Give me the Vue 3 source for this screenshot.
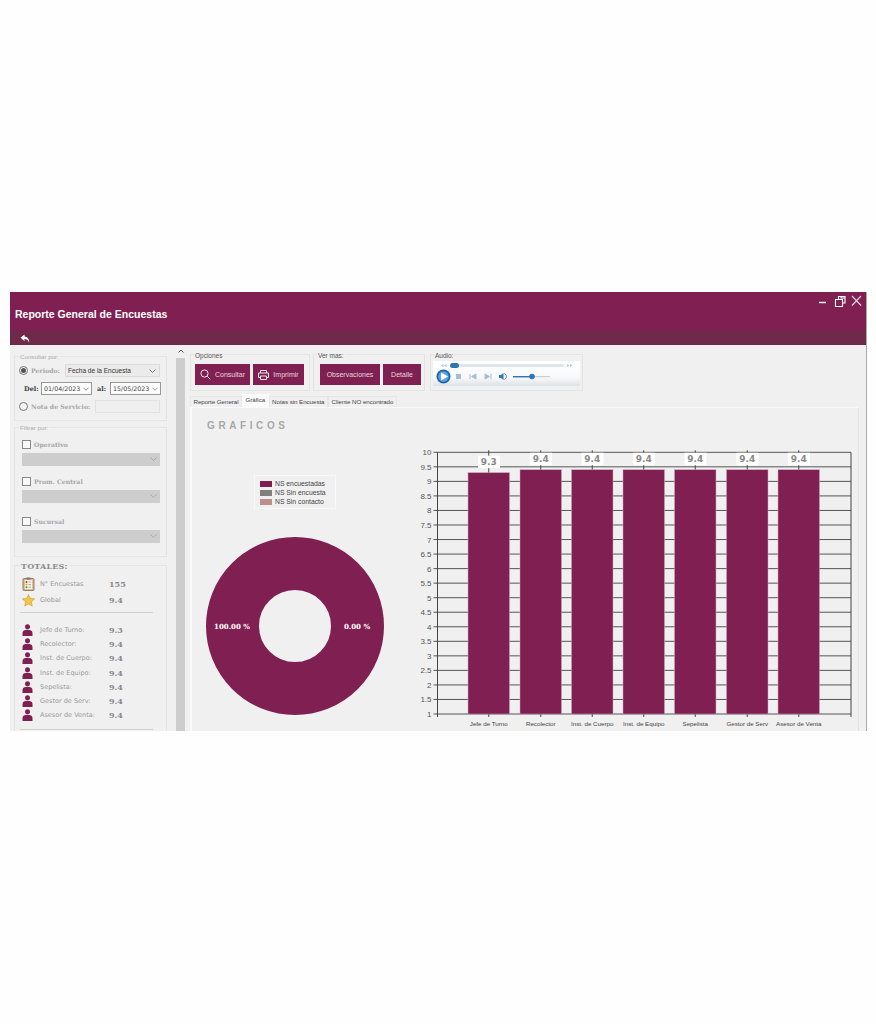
<script setup>
const scoreRows = [
  { label: 'Jefe de Turno:', value: '9.3' },
  { label: 'Recolector:', value: '9.4' },
  { label: 'Inst. de Cuerpo:', value: '9.4' },
  { label: 'Inst. de Equipo:', value: '9.4' },
  { label: 'Sepelista:', value: '9.4' },
  { label: 'Gestor de Serv:', value: '9.4' },
  { label: 'Asesor de Venta:', value: '9.4' },
]

const filters = [
  { label: 'Operativo', gap: 'first' },
  { label: 'Prom. Central', gap: 'second' },
  { label: 'Sucursal', gap: 'third' },
]

const tabs = ['Reporte General', 'Gráfica', 'Notas sin Encuesta', 'Cliente NO encontrado']

const legend = [
  { label: 'NS encuestadas', color: '#802052' },
  { label: 'NS Sin encuesta', color: '#808080' },
  { label: 'NS Sin contacto', color: '#bc8f8f' },
]

// bar chart, in svg units
const axisLeft = 27.5
const axisRight = 441
const yTop = 12.3
const yBottom = 274
const yFor = (v) => yBottom - ((v - 1) / 9) * (yBottom - yTop)

const ticks = []
for (let v = 1; v <= 10; v += 0.5) ticks.push(v)

const bars = [
  { label: 'Jefe de Turno', value: 9.3, x: 58 },
  { label: 'Recolector', value: 9.4, x: 110 },
  { label: 'Inst. de Cuerpo', value: 9.4, x: 161.5 },
  { label: 'Inst. de Equipo', value: 9.4, x: 213 },
  { label: 'Sepelista', value: 9.4, x: 264.5 },
  { label: 'Gestor de Serv', value: 9.4, x: 316.5 },
  { label: 'Asesor de Venta', value: 9.4, x: 368 },
]
const barWidth = 41.5
</script>

<template>
  <div class="page">
    <div class="window">
      <header class="titlebar">
        <h1>Reporte General de Encuestas</h1>
        <div class="controls">
          <svg width="44" height="14" viewBox="0 0 44 14">
            <path d="M0 8.5H7" stroke="#fff" stroke-width="1.4" />
            <path d="M16.5 5.5H23.5V12.5H16.5ZM19.5 5.5V2.5H26V9H23.5M22 2.5H26V4H22Z" fill="none" stroke="#fff" stroke-width="1.1" />
            <path d="M33 2L42 11.5M42 2L33 11.5" stroke="#e8d5df" stroke-width="1.1" />
          </svg>
        </div>
      </header>
      <div class="subbar">
        <svg width="10" height="9" viewBox="0 0 10 9">
          <path d="M4.5 0.5L0.5 3.8L4.5 7V5C6.5 5 8 6 9.3 8.5C9 5 7.5 2.8 4.5 2.6Z" fill="#fff" />
        </svg>
      </div>

      <div class="body">
        <aside class="sidebar">
          <section class="group consult">
            <span class="legend">Consultar por:</span>
            <div class="row period-row">
              <span class="radio checked"></span>
              <span class="serif-label">Periodo:</span>
              <div class="select period">Fecha de la Encuesta
                <svg class="chev" width="7" height="4" viewBox="0 0 7 4"><path d="M0.5 0.5L3.5 3.5L6.5 0.5" fill="none" stroke="#777" /></svg>
              </div>
            </div>
            <div class="row date-row">
              <b class="date-label">Del:</b>
              <div class="date">01/04/2023
                <svg class="chev" width="6" height="4" viewBox="0 0 7 4"><path d="M0.5 0.5L3.5 3.5L6.5 0.5" fill="none" stroke="#888" /></svg>
              </div>
              <b class="date-label al">al:</b>
              <div class="date">15/05/2023
                <svg class="chev" width="6" height="4" viewBox="0 0 7 4"><path d="M0.5 0.5L3.5 3.5L6.5 0.5" fill="none" stroke="#888" /></svg>
              </div>
            </div>
            <div class="row nota-row">
              <span class="radio"></span>
              <span class="serif-label">Nota de Servicio:</span>
              <div class="nota-input"></div>
            </div>
          </section>

          <section class="group filter">
            <span class="legend">Filtrar por:</span>
            <div v-for="f in filters" :key="f.label" class="filter-item" :class="f.gap">
              <div class="row check-row">
                <span class="check"></span>
                <span class="serif-label">{{ f.label }}</span>
              </div>
              <div class="combo">
                <svg class="chev" width="7" height="4" viewBox="0 0 7 4"><path d="M0.5 0.5L3.5 3.5L6.5 0.5" fill="none" stroke="#aaa" /></svg>
              </div>
            </div>
          </section>

          <section class="group totals">
            <span class="legend strong">TOTALES:</span>
            <div class="total-row first">
              <svg width="13" height="14" viewBox="0 0 13 14">
                <rect x="1" y="1.5" width="11" height="12" rx="1" fill="#d9b48a" stroke="#8a6a4a" stroke-width="0.8" />
                <rect x="2.8" y="3" width="7.4" height="9.2" fill="#f7f3e8" />
                <rect x="4.5" y="0.5" width="4" height="2" fill="#777" />
                <circle cx="4.5" cy="5" r="1" fill="#c0392b" />
                <circle cx="4.5" cy="7.6" r="1" fill="#d9a520" />
                <circle cx="4.5" cy="10.2" r="1" fill="#4a9a3a" />
                <path d="M6.5 5H9M6.5 7.6H9M6.5 10.2H9" stroke="#888" stroke-width="0.7" />
              </svg>
              <span class="total-label">N° Encuestas</span>
              <span class="total-value">155</span>
            </div>
            <div class="total-row">
              <svg width="13" height="13" viewBox="0 0 13 13">
                <path d="M6.5 0.5L8.3 4.4L12.6 4.9L9.4 7.8L10.3 12L6.5 9.9L2.7 12L3.6 7.8L0.4 4.9L4.7 4.4Z" fill="#f2c544" stroke="#c99a2a" stroke-width="0.6" />
              </svg>
              <span class="total-label">Global</span>
              <span class="total-value">9.4</span>
            </div>
            <hr class="divider" />
            <div v-for="r in scoreRows" :key="r.label" class="score-row">
              <svg width="11" height="12" viewBox="0 0 11 12">
                <circle cx="5.5" cy="2.8" r="2.5" fill="#802052" />
                <path d="M0.5 12V9C0.5 7 2.5 5.8 5.5 5.8S10.5 7 10.5 9V12Z" fill="#802052" />
              </svg>
              <span class="total-label">{{ r.label }}</span>
              <span class="total-value">{{ r.value }}</span>
            </div>
            <hr class="divider last" />
          </section>
        </aside>

        <div class="scrollbar">
          <svg width="6" height="4" viewBox="0 0 6 4"><path d="M0.5 3.5L3 1L5.5 3.5" fill="none" stroke="#555" /></svg>
          <div class="thumb"></div>
        </div>

        <main class="main">
          <div class="toolbar">
            <section class="group opciones">
              <span class="legend dark">Opciones</span>
              <button class="btn consultar">
                <svg width="11" height="11" viewBox="0 0 11 11"><circle cx="4.5" cy="4.5" r="3.6" fill="none" stroke="#f1e4ea" stroke-width="1" /><path d="M7.2 7.2L10.3 10.3" stroke="#f1e4ea" stroke-width="1" /></svg>
                Consultar
              </button>
              <button class="btn imprimir">
                <svg width="11" height="10" viewBox="0 0 11 10"><path d="M2.5 3V0.5H8.5V3M2.5 7.5H0.5V3H10.5V7.5H8.5M2.5 6H8.5V9.5H2.5Z" fill="none" stroke="#f1e4ea" stroke-width="1" /></svg>
                Imprimir
              </button>
            </section>
            <section class="group vermas">
              <span class="legend dark">Ver mas:</span>
              <button class="btn observaciones">Observaciones</button>
              <button class="btn detalle">Detalle</button>
            </section>
            <section class="group audio">
              <span class="legend dark">Audio:</span>
              <svg class="player" width="147" height="25" viewBox="0 0 147 25">
                <defs>
                  <linearGradient id="playerBg" x1="0" y1="0" x2="0" y2="1">
                    <stop offset="0" stop-color="#ffffff" />
                    <stop offset="0.65" stop-color="#f8f9fa" />
                    <stop offset="1" stop-color="#dfe3e6" />
                  </linearGradient>
                </defs>
                <rect width="147" height="25" fill="url(#playerBg)" />
                <path d="M8 4.5L10.5 3V6ZM11 4.5L13.5 3V6Z" fill="#a9c3dc" />
                <rect x="17" y="3" width="114" height="3" rx="1.5" fill="#dfe5ea" />
                <rect x="17" y="2" width="9" height="5" rx="2.5" fill="#2f75b5" />
                <path d="M134 3V6L136.5 4.5ZM137 3V6L139.5 4.5Z" fill="#a9c3dc" />
                <circle cx="10.5" cy="15.5" r="7" fill="#1f63ad" />
                <circle cx="10.5" cy="15.5" r="5.2" fill="#5aa2e0" />
                <path d="M8 11.5L15 15.5L8 19.5Z" fill="#fff" />
                <rect x="23" y="13" width="5" height="5" fill="#a7bdd3" />
                <path d="M37 13V18M43 13L38.5 15.5L43 18Z" stroke="#a7bdd3" fill="#a7bdd3" />
                <path d="M52 13L56.5 15.5L52 18ZM58 13V18" stroke="#a7bdd3" fill="#a7bdd3" />
                <path d="M66 14H68L70.5 12V19L68 17H66Z" fill="#2f75b5" />
                <path d="M71.5 12.5C74 14 74 17 71.5 18.5" stroke="#2f75b5" fill="none" />
                <rect x="80" y="15" width="37" height="1.2" fill="#c6ced6" />
                <rect x="80" y="15" width="18" height="1.4" fill="#2f75b5" />
                <circle cx="99" cy="15.5" r="2.8" fill="#2f75b5" />
              </svg>
            </section>
          </div>

          <nav class="tabs">
            <span v-for="(t, i) in tabs" :key="t" class="tab" :class="{ active: i === 1 }">{{ t }}</span>
          </nav>

          <div class="panel">
            <h2>GRAFICOS</h2>
            <div class="charts">
              <div class="donut-col">
                <ul class="chart-legend">
                  <li v-for="l in legend" :key="l.label">
                    <i :style="{ background: l.color }"></i>{{ l.label }}
                  </li>
                </ul>
                <svg class="donut" width="180" height="180" viewBox="0 0 180 180">
                  <circle cx="90" cy="90" r="62.5" fill="none" stroke="#802052" stroke-width="53" />
                  <text x="27" y="93" class="donut-text">100.00 %</text>
                  <text x="152" y="93" class="donut-text">0.00 %</text>
                </svg>
              </div>

              <svg class="bars" width="449" height="291" viewBox="0 0 449 291">
                <g v-for="t in ticks" :key="t">
                  <line :x1="axisLeft - 4" :x2="axisRight" :y1="yFor(t)" :y2="yFor(t)" stroke="#555" stroke-width="1" />
                  <text :x="axisLeft - 6" :y="yFor(t) + 3" class="tick">{{ t }}</text>
                </g>
                <line :x1="axisLeft" :x2="axisLeft" :y1="yTop" :y2="yBottom + 3" stroke="#444" />
                <line :x1="axisRight" :x2="axisRight" :y1="yTop" :y2="yBottom + 3" stroke="#444" />
                <g v-for="b in bars" :key="b.label">
                  <line :x1="b.x + barWidth / 2" :x2="b.x + barWidth / 2" :y1="yTop - 2" :y2="yBottom + 3" stroke="#444" />
                  <rect :x="b.x" :y="yFor(b.value)" :width="barWidth" :height="yBottom - yFor(b.value)" fill="#802052" stroke="#c9a5b8" stroke-width="0.5" />
                  <rect :x="b.x + 10" :y="yFor(b.value) - 17" width="22" height="12.5" fill="#fff" />
                  <text :x="b.x + barWidth / 2" :y="yFor(b.value) - 7.5" class="bar-value">{{ b.value }}</text>
                  <text :x="b.x + barWidth / 2" :y="yBottom + 11.5" class="bar-label">{{ b.label }}</text>
                </g>
              </svg>
            </div>
          </div>
        </main>
      </div>
    </div>
  </div>
</template>

<style scoped>
.page {
  height: 1024px;
  box-sizing: border-box;
  padding: 292px 9px 0 10px;
  background: #fefefe;
  font-family: "Liberation Sans", Arial, sans-serif;
}

.window {
  height: 439px;
  overflow: hidden;
  background: #f0f0f0;
  border-right: 1px solid #aaa;
  display: flex;
  flex-direction: column;
}

.titlebar {
  height: 39px;
  flex: none;
  background: #802052;
  display: flex;
  justify-content: space-between;
}

.titlebar h1 {
  margin: 15px 0 0 5px;
  font-size: 10.5px;
  line-height: 14px;
  color: #fff;
  font-weight: bold;
}

.controls {
  padding: 2px 3px 0 0;
}

.subbar {
  height: 14px;
  flex: none;
  background: #6e2a48;
  padding-left: 10px;
  display: flex;
  align-items: center;
}

.body {
  flex: 1;
  display: flex;
  min-height: 0;
}

.sidebar {
  width: 166px;
  flex: none;
  box-sizing: border-box;
  padding: 11px 0 0 4px;
}

.group {
  position: relative;
  box-sizing: border-box;
  border: 1px solid #e4e4e4;
}

.legend {
  position: absolute;
  top: -4px;
  left: 4px;
  padding: 0 1px;
  background: #f0f0f0;
  font-size: 6.2px;
  line-height: 7px;
  color: #aaa;
}

.legend.dark {
  left: 3px;
  color: #555;
  top: -3px;
  font-size: 6.5px;
}

.legend.strong {
  left: 5px;
  top: -5px;
  font-family: "DejaVu Serif", serif;
  font-weight: bold;
  font-size: 8px;
  line-height: 10px;
  letter-spacing: 0.2px;
  color: #8c8c8c;
}

.consult {
  width: 153px;
  height: 65px;
  padding: 7px 6px 0 4px;
}

.row {
  display: flex;
  align-items: center;
}

.radio {
  width: 7px;
  height: 7px;
  border: 1px solid #777;
  border-radius: 50%;
  flex: none;
  background: #f6f6f6;
  position: relative;
}

.radio.checked::after {
  content: "";
  position: absolute;
  inset: 1px;
  border-radius: 50%;
  background: #555;
}

.serif-label {
  margin-left: 3px;
  font-family: "DejaVu Serif", serif;
  font-weight: bold;
  font-size: 6.2px;
  color: #a6a6a6;
  white-space: nowrap;
}

.period-row {
  height: 13px;
}

.select {
  position: relative;
  margin-left: auto;
  width: 95px;
  height: 13px;
  box-sizing: border-box;
  border: 1px solid #dadada;
  background: #ebebeb;
  font-size: 6.5px;
  line-height: 11px;
  padding-left: 2px;
  color: #333;
}

.chev {
  position: absolute;
  right: 3px;
  top: 4px;
}

.date .chev {
  right: 2px;
}

.date-row {
  margin-top: 5px;
  height: 13px;
  padding-left: 5px;
}

.date-label {
  font-family: "DejaVu Serif", serif;
  font-size: 6.5px;
  color: #444;
  width: 17px;
  flex: none;
}

.date-label.al {
  margin-left: 5px;
  width: 13px;
}

.date {
  position: relative;
  width: 51px;
  height: 13px;
  flex: none;
  box-sizing: border-box;
  border: 1px solid #999;
  background: #fbfbfb;
  font-family: "DejaVu Sans", sans-serif;
  font-size: 6.3px;
  line-height: 11px;
  padding-left: 2px;
  color: #444;
}

.nota-row {
  margin-top: 5px;
  height: 13px;
}

.nota-input {
  width: 65px;
  height: 13px;
  box-sizing: border-box;
  margin-left: auto;
  border: 1px solid #e2e2e2;
  background: #efefef;
}

.filter {
  width: 153px;
  height: 130px;
  margin-top: 6px;
  padding: 0 7px;
}

.filter-item.first {
  margin-top: 11px;
}

.filter-item.second {
  margin-top: 10px;
}

.filter-item.third {
  margin-top: 13px;
}

.check-row {
  height: 11px;
}

.check {
  width: 7px;
  height: 7px;
  flex: none;
  border: 1px solid #888;
  background: #f8f8f8;
}

.check-row .serif-label {
  margin-left: 3px;
}

.combo {
  position: relative;
  margin-top: 3px;
  width: 138px;
  height: 13px;
  background: #cdcdcd;
}

.totals {
  width: 153px;
  height: 200px;
  margin-top: 8px;
  padding: 0 0 0 6px;
  border-bottom: none;
}

.total-row,
.score-row {
  display: flex;
  align-items: center;
}

.total-row {
  height: 16px;
}

.total-row.first {
  margin-top: 10px;
}

.score-row {
  height: 14.2px;
}

.total-row svg,
.score-row svg {
  flex: none;
  margin-left: 1px;
}

.total-label {
  width: 69px;
  font-family: "DejaVu Sans", sans-serif;
  font-size: 6.5px;
  color: #999;
  white-space: nowrap;
}

.score-row .total-label {
  margin-left: 7px;
}

.total-row .total-label {
  margin-left: 5px;
}

.total-value {
  font-family: "DejaVu Serif", serif;
  font-weight: bold;
  font-size: 8px;
  color: #8a8a8a;
}

.divider {
  width: 133px;
  height: 0;
  margin: 4px 0 10px -1px;
  border: none;
  border-top: 1px solid #cfcfcf;
}

.divider.last {
  margin: 7px 0 0 -1px;
}

.scrollbar {
  width: 9px;
  flex: none;
  display: flex;
  flex-direction: column;
  align-items: center;
  padding-top: 4px;
}

.scrollbar svg {
  flex: none;
}

.thumb {
  flex: 1;
  align-self: stretch;
  margin-top: 5px;
  background: #cdcdcd;
}

.main {
  width: 669px;
  flex: none;
  margin-left: 5px;
  display: flex;
  flex-direction: column;
}

.toolbar {
  display: flex;
  padding-top: 9px;
  flex: none;
  height: 37px;
}

.opciones,
.vermas {
  display: flex;
  align-items: flex-start;
  padding: 9px 0 0 4px;
  gap: 3px;
}

.opciones {
  width: 120px;
}

.vermas {
  width: 112px;
  margin-left: 3px;
  padding-left: 6px;
}

.audio {
  width: 153px;
  margin-left: 5px;
  padding: 6px 0 0 2px;
}

.player {
  display: block;
}

.btn {
  height: 21px;
  box-sizing: border-box;
  border: none;
  padding: 0;
  background: #802052;
  color: #e6d6de;
  font-family: "Liberation Sans", Arial, sans-serif;
  font-size: 7px;
  display: flex;
  align-items: center;
  justify-content: center;
  gap: 4px;
}

.consultar {
  width: 55px;
}

.imprimir {
  width: 51px;
}

.observaciones {
  width: 60px;
}

.detalle {
  width: 38px;
}

.tabs {
  display: flex;
  align-items: flex-end;
  height: 16px;
  flex: none;
}

.tab {
  height: 11px;
  box-sizing: border-box;
  padding: 0 2.5px;
  border: 1px solid #e6e6e6;
  border-bottom: none;
  font-size: 6.2px;
  letter-spacing: -0.05px;
  line-height: 10px;
  color: #444;
  white-space: nowrap;
}

.tab.active {
  height: 13px;
  background: #fbfbfb;
  border-color: #fbfbfb;
}

.panel {
  flex: 1;
  border-left: 2px solid #fafafa;
  border-right: 1px solid #e0e0e0;
  border-top: 1px solid #fafafa;
  background: #f0f0f0;
  min-height: 0;
}

.panel h2 {
  margin: 12px 0 0 15px;
  font-size: 10px;
  line-height: 12px;
  letter-spacing: 3.6px;
  color: #a8a8a8;
  font-weight: bold;
}

.charts {
  display: flex;
  align-items: flex-start;
}

.donut-col {
  width: 218px;
  flex: none;
  display: flex;
  flex-direction: column;
  align-items: flex-start;
}

.chart-legend {
  list-style: none;
  margin: 43px 0 0 62px;
  padding: 3px 0 0 5px;
  width: 82px;
  height: 34px;
  box-sizing: border-box;
  border: 1px solid #f8f8f8;
}

.chart-legend li {
  display: flex;
  align-items: center;
  height: 9px;
  font-size: 6.8px;
  color: #444;
  white-space: nowrap;
}

.chart-legend i {
  width: 12px;
  height: 6px;
  margin-right: 3px;
  flex: none;
}

.donut {
  display: block;
  margin: 27px 0 0 13px;
}

.donut-text {
  font-family: "DejaVu Serif", serif;
  font-weight: bold;
  font-size: 7px;
  fill: #fff;
  text-anchor: middle;
}

.bars {
  display: block;
  margin-top: 8px;
  flex: none;
}

.tick {
  font-family: "Liberation Sans", Arial, sans-serif;
  font-size: 8px;
  fill: #555;
  text-anchor: end;
}

.bar-value {
  font-family: "DejaVu Sans", sans-serif;
  font-weight: bold;
  font-size: 9px;
  fill: #888;
  text-anchor: middle;
}

.bar-label {
  font-family: "Liberation Sans", Arial, sans-serif;
  font-size: 6.2px;
  fill: #444;
  text-anchor: middle;
}
</style>
